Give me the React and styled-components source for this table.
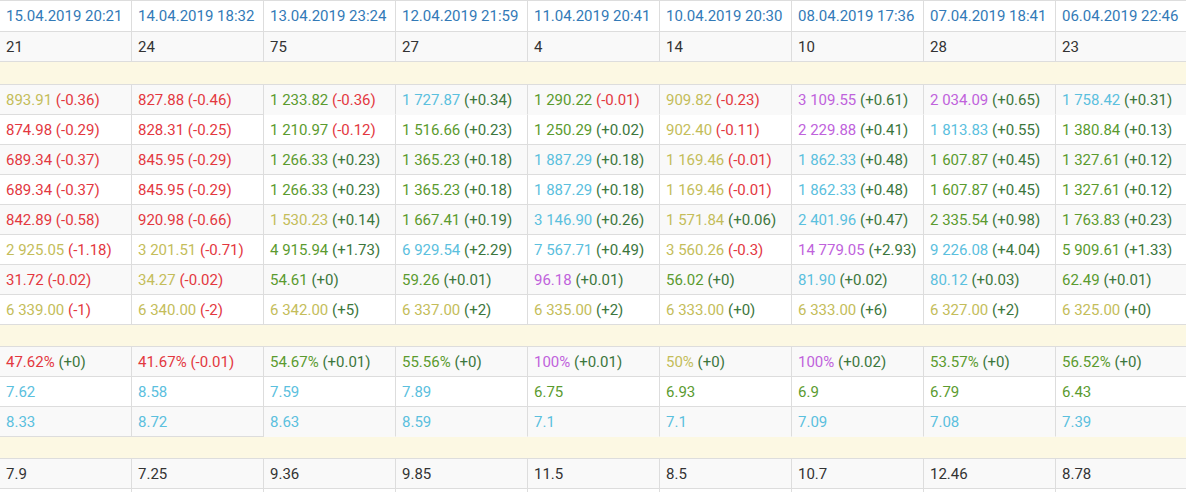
import React from "react";
import styled, { createGlobalStyle } from "styled-components";

const Global = createGlobalStyle`
  html, body { margin: 0; padding: 0; background: #fff; overflow: hidden; }
  body { font-family: Roboto, "Noto Sans", Arial, sans-serif; }
`;

const COLORS = {
  Y: "#c4bd5a",
  R: "#e3383f",
  G: "#5b9b2f",
  B: "#5bc0de",
  P: "#c062dc",
  K: "#333333",
};

const Table = styled.table`
  border-collapse: separate;
  border-spacing: 0;
  table-layout: fixed;
  width: 1188px;
  font-size: 15px;
  color: #333;
`;

const Col = styled.col`
  width: 132px;
`;

const HeadCell = styled.th`
  text-align: left;
  font-weight: 400;
  color: #337ab7;
  height: 30px;
  padding: 0 6px;
  border-top: 1px solid #dddddd;
  border-right: 1px solid #dddddd;
  border-bottom: 1px solid #dddddd;
  white-space: nowrap;
  background: #ffffff;
`;

const Row = styled.tr`
  background: ${(p) => (p.$striped ? "#f9f9f9" : "#ffffff")};
`;

const Cell = styled.td`
  height: 29px;
  padding: 0 6px;
  border-right: 1px solid #dddddd;
  border-bottom: 1px solid ${(p) => (p.$open ? "transparent" : "#dddddd")};
  white-space: nowrap;
  overflow: hidden;
  color: ${(p) => COLORS[p.$tone || "K"]};
`;

const Spacer = styled.td`
  height: ${(p) => p.$h}px;
  padding: 0;
  background: #fcf8e3;
  border-bottom: 1px solid #dddddd;
`;

const Delta = styled.span`
  color: ${(p) => (p.$neg ? "#e3383f" : "#3c763d")};
`;

const headers = [
  "15.04.2019 20:21",
  "14.04.2019 18:32",
  "13.04.2019 23:24",
  "12.04.2019 21:59",
  "11.04.2019 20:41",
  "10.04.2019 20:30",
  "08.04.2019 17:36",
  "07.04.2019 18:41",
  "06.04.2019 22:46",
];

const counts = ["21", "24", "75", "27", "4", "14", "10", "28", "23"];

const priceRows = [
  [["893.91","Y","-0.36"],["827.88","R","-0.46"],["1 233.82","G","-0.36"],["1 727.87","B","+0.34"],["1 290.22","G","-0.01"],["909.82","Y","-0.23"],["3 109.55","P","+0.61"],["2 034.09","P","+0.65"],["1 758.42","B","+0.31"]],
  [["874.98","R","-0.29"],["828.31","R","-0.25"],["1 210.97","G","-0.12"],["1 516.66","G","+0.23"],["1 250.29","G","+0.02"],["902.40","Y","-0.11"],["2 229.88","P","+0.41"],["1 813.83","B","+0.55"],["1 380.84","G","+0.13"]],
  [["689.34","R","-0.37"],["845.95","R","-0.29"],["1 266.33","G","+0.23"],["1 365.23","G","+0.18"],["1 887.29","B","+0.18"],["1 169.46","Y","-0.01"],["1 862.33","B","+0.48"],["1 607.87","G","+0.45"],["1 327.61","G","+0.12"]],
  [["689.34","R","-0.37"],["845.95","R","-0.29"],["1 266.33","G","+0.23"],["1 365.23","G","+0.18"],["1 887.29","B","+0.18"],["1 169.46","Y","-0.01"],["1 862.33","B","+0.48"],["1 607.87","G","+0.45"],["1 327.61","G","+0.12"]],
  [["842.89","R","-0.58"],["920.98","R","-0.66"],["1 530.23","Y","+0.14"],["1 667.41","G","+0.19"],["3 146.90","B","+0.26"],["1 571.84","Y","+0.06"],["2 401.96","B","+0.47"],["2 335.54","G","+0.98"],["1 763.83","G","+0.23"]],
  [["2 925.05","Y","-1.18"],["3 201.51","Y","-0.71"],["4 915.94","G","+1.73"],["6 929.54","B","+2.29"],["7 567.71","B","+0.49"],["3 560.26","Y","-0.3"],["14 779.05","P","+2.93"],["9 226.08","B","+4.04"],["5 909.61","G","+1.33"]],
  [["31.72","R","-0.02"],["34.27","Y","-0.02"],["54.61","G","+0"],["59.26","G","+0.01"],["96.18","P","+0.01"],["56.02","G","+0"],["81.90","B","+0.02"],["80.12","B","+0.03"],["62.49","G","+0.01"]],
  [["6 339.00","Y","-1"],["6 340.00","Y","-2"],["6 342.00","Y","+5"],["6 337.00","Y","+2"],["6 335.00","Y","+2"],["6 333.00","Y","+0"],["6 333.00","Y","+6"],["6 327.00","Y","+2"],["6 325.00","Y","+0"]],
];

const rateRows = [
  [["47.62%","R","+0"],["41.67%","R","-0.01"],["54.67%","G","+0.01"],["55.56%","G","+0"],["100%","P","+0.01"],["50%","Y","+0"],["100%","P","+0.02"],["53.57%","G","+0"],["56.52%","G","+0"]],
  [["7.62","B"],["8.58","B"],["7.59","B"],["7.89","B"],["6.75","G"],["6.93","G"],["6.9","G"],["6.79","G"],["6.43","G"]],
  [["8.33","B"],["8.72","B"],["8.63","B"],["8.59","B"],["7.1","B"],["7.1","B"],["7.09","B"],["7.08","B"],["7.39","B"]],
];

const lastRow = ["7.9", "7.25", "9.36", "9.85", "11.5", "8.5", "10.7", "12.46", "8.78"];

function ValueCell({ data, open }) {
  const [value, tone, delta] = data;
  return (
    <Cell $tone={tone} $open={open}>
      {value}
      {delta !== undefined && (
        <>
          {" "}
          <Delta $neg={delta.startsWith("-")}>({delta})</Delta>
        </>
      )}
    </Cell>
  );
}

function SpacerRow({ h }) {
  return (
    <tr>
      <Spacer colSpan={9} $h={h} />
    </tr>
  );
}

export default function App() {
  return (
    <>
      <Global />
      <Table>
        <colgroup>
          {headers.map((h) => (
            <Col key={h} />
          ))}
        </colgroup>
        <thead>
          <tr>
            {headers.map((h) => (
              <HeadCell key={h}>{h}</HeadCell>
            ))}
          </tr>
        </thead>
        <tbody>
          <Row $striped>
            {counts.map((c, i) => (
              <Cell key={i}>{c}</Cell>
            ))}
          </Row>
          <SpacerRow h={22} />
          {priceRows.map((row, r) => (
            <Row key={r} $striped={r % 2 === 0}>
              {row.map((d, i) => (
                <ValueCell key={i} data={d} open={r === 0 && i >= 2} />
              ))}
            </Row>
          ))}
          <SpacerRow h={21} />
          {rateRows.map((row, r) => (
            <Row key={r} $striped={r % 2 === 0}>
              {row.map((d, i) => (
                <ValueCell key={i} data={d} open={r === 2 && i >= 2} />
              ))}
            </Row>
          ))}
          <SpacerRow h={21} />
          <Row $striped>
            {lastRow.map((v, i) => (
              <Cell key={i}>{v}</Cell>
            ))}
          </Row>
          <Row>
            {lastRow.map((v, i) => (
              <Cell key={i}>&nbsp;</Cell>
            ))}
          </Row>
        </tbody>
      </Table>
    </>
  );
}
